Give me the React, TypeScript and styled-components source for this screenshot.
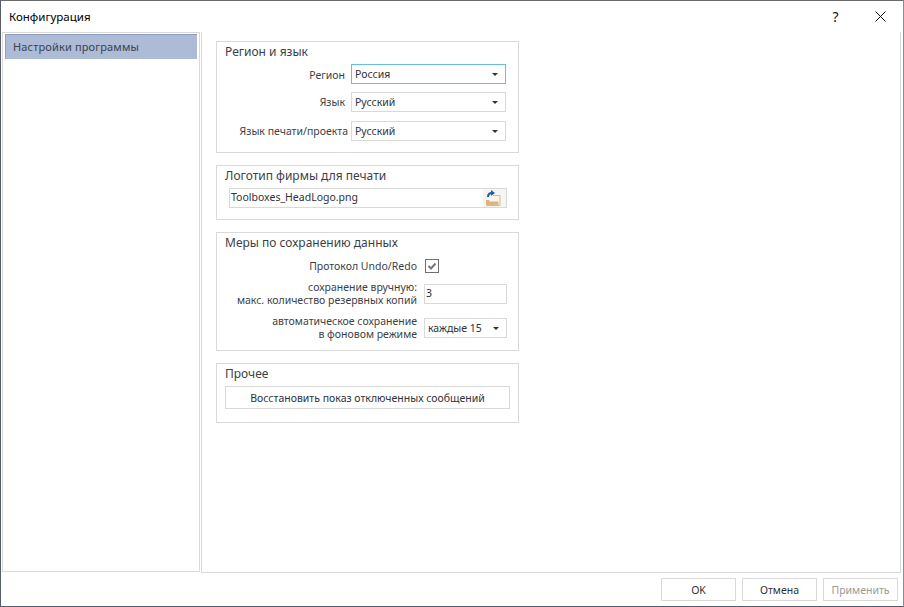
import React from 'react';
import styled, { createGlobalStyle } from 'styled-components';

const Global = createGlobalStyle`
  html, body { margin: 0; padding: 0; background: #fff; }
  body { font-family: "Noto Sans", "Liberation Sans", sans-serif; }
`;

const Window = styled.div`
  box-sizing: border-box;
  width: 904px;
  height: 607px;
  display: flex;
  flex-direction: column;
  background: #fff;
  border: 1px solid #565c6c;
  border-top-color: #6a6a6a;
  border-right-color: #8a8d96;
  overflow: hidden;
`;

const TitleBar = styled.div`
  height: 31px;
  flex: none;
  display: flex;
  align-items: center;
  padding-left: 8px;
  font-size: 11.5px;
  color: #000;
`;

const TitleText = styled.span`
  flex: 1;
`;

const TitleButton = styled.div`
  width: 45px;
  height: 31px;
  display: flex;
  align-items: center;
  justify-content: center;
  font-size: 14px;
  color: #111;
`;

const Body = styled.div`
  flex: none;
  height: 541px;
  display: flex;
  padding-left: 1px;
  gap: 1px;
`;

const Sidebar = styled.div`
  box-sizing: border-box;
  width: 198px;
  height: 540px;
  border: 1px solid #d9d9d9;
  padding: 1px 2px;
`;

const NavItem = styled.div`
  height: 25px;
  box-sizing: border-box;
  padding: 0 0 1px 7px;
  display: flex;
  align-items: center;
  background: #adbbd6;
  border-top: 1px solid #8f9ec0;
  border-left: 1px solid #8f9ec0;
  font-size: 11px;
  letter-spacing: 0.15px;
  color: #3c4250;
`;

const Content = styled.div`
  box-sizing: border-box;
  width: 700px;
  height: 541px;
  border: 1px solid #d9d9d9;
  border-top: none;
  padding: 9px 0 0 14px;
  display: flex;
  flex-direction: column;
  align-items: flex-start;
  gap: 12px;
`;

const Group = styled.section<{ $height: number }>`
  box-sizing: border-box;
  width: 303px;
  height: ${(p) => p.$height}px;
  border: 1px solid #d9d9d9;
  padding: 0 8px;
  display: flex;
  flex-direction: column;
`;

const GroupTitle = styled.div`
  height: 21px;
  flex: none;
  font-size: 12px;
  line-height: 20px;
  color: #3c3f48;
`;

const Row = styled.div<{ $top?: number; $labelWidth: number; $gap: number }>`
  display: grid;
  grid-template-columns: ${(p) => p.$labelWidth}px auto;
  column-gap: ${(p) => p.$gap}px;
  align-items: center;
  margin-top: ${(p) => p.$top ?? 0}px;
`;

const Label = styled.div<{ $overhang?: number; $drop?: number }>`
  text-align: right;
  font-size: 10.5px;
  line-height: 13px;
  color: #3c3f48;
  white-space: nowrap;
  margin-right: ${(p) => -(p.$overhang ?? 0)}px;
  padding-top: ${(p) => p.$drop ?? 0}px;
`;

const Field = styled.div<{ $width: number; $focused?: boolean }>`
  box-sizing: border-box;
  width: ${(p) => p.$width}px;
  height: 20px;
  padding: 0 3px;
  display: flex;
  align-items: center;
  justify-content: space-between;
  background: #fff;
  border: 1px solid ${(p) => (p.$focused ? '#6dbce4' : '#d9d9d9')};
  font-size: 10.5px;
  color: #2f3138;
`;

const NumberField = styled(Field)`
  padding: 0 0 3px 1px;
`;

const Caret = styled.span`
  width: 0;
  height: 0;
  margin-right: 4px;
  border-left: 3px solid transparent;
  border-right: 3px solid transparent;
  border-top: 3px solid #333;
`;

const FileField = styled.div`
  box-sizing: border-box;
  width: 278px;
  height: 20px;
  margin: 1px 0 0 4px;
  padding-left: 1px;
  display: flex;
  align-items: center;
  justify-content: space-between;
  border: 1px solid #d9d9d9;
  font-size: 10.5px;
  color: #2f3138;
`;

const FileName = styled.span`
  padding-bottom: 2px;
`;

const Browse = styled.div`
  box-sizing: border-box;
  width: 23px;
  height: 18px;
  padding: 0 3px 0 0;
  background: #f5f5f5;
  display: flex;
  align-items: center;
  justify-content: center;
`;

const Check = styled.div`
  box-sizing: border-box;
  width: 14px;
  height: 14px;
  margin-left: 1px;
  border: 1px solid #6e6e6e;
  display: flex;
  align-items: center;
  justify-content: center;
`;

const WideButton = styled.div`
  box-sizing: border-box;
  width: 285px;
  height: 23px;
  margin-top: 1px;
  display: flex;
  align-items: center;
  justify-content: center;
  border: 1px solid #d9d9d9;
  font-size: 10.5px;
  color: #2f3138;
`;

const Footer = styled.div`
  flex: 1;
  display: flex;
  justify-content: flex-end;
  gap: 6px;
  padding: 5px 5px 0 0;
`;

const FooterButton = styled.div<{ $disabled?: boolean }>`
  box-sizing: border-box;
  width: 75px;
  height: 23px;
  display: flex;
  align-items: center;
  justify-content: center;
  border: 1px solid #d9d9d9;
  font-size: 10.5px;
  color: ${(p) => (p.$disabled ? '#9a9a9a' : '#2f3138')};
`;

const FolderIcon = () => (
  <svg width="16" height="16" viewBox="0 0 16 16">
    <path d="M8 5.500h7v10H2v-3" fill="#fbf6ea" stroke="#e3b878" strokeWidth="1" />
    <path d="M1 10h3l1 1.500h8.500V15.500H1z" fill="#dcb67c" />
    <path d="M3 7C3 4 5 3 7 3" fill="none" stroke="#1f5da8" strokeWidth="2" />
    <path d="M6 0L10 3L6 6z" fill="#1f5da8" />
  </svg>
);

const CloseIcon = () => (
  <svg width="11" height="11" viewBox="0 0 11 11">
    <path d="M0.500 0.500L10.500 10.500M10.500 0.500L0.500 10.500" stroke="#111" strokeWidth="1" />
  </svg>
);

const CheckIcon = () => (
  <svg width="10" height="10" viewBox="0 0 10 10">
    <path d="M1.500 5L4 7.500L8.500 2.500" fill="none" stroke="#777" strokeWidth="2" />
  </svg>
);

export default function App() {
  return (
    <>
      <Global />
      <Window>
        <TitleBar>
          <TitleText>Конфигурация</TitleText>
          <TitleButton>?</TitleButton>
          <TitleButton>
            <CloseIcon />
          </TitleButton>
        </TitleBar>
        <Body>
          <Sidebar>
            <NavItem>Настройки программы</NavItem>
          </Sidebar>
          <Content>
            <Group $height={112}>
              <GroupTitle>Регион и язык</GroupTitle>
              <Row $labelWidth={120} $gap={6} $top={1}>
                <Label $drop={2}>Регион</Label>
                <Field $width={155} $focused>
                  Россия
                  <Caret />
                </Field>
              </Row>
              <Row $labelWidth={120} $gap={6} $top={8}>
                <Label>Язык</Label>
                <Field $width={155}>
                  Русский
                  <Caret />
                </Field>
              </Row>
              <Row $labelWidth={120} $gap={6} $top={9}>
                <Label $overhang={3}>Язык печати/проекта</Label>
                <Field $width={155}>
                  Русский
                  <Caret />
                </Field>
              </Row>
            </Group>
            <Group $height={55}>
              <GroupTitle>Логотип фирмы для печати</GroupTitle>
              <FileField>
                <FileName>Toolboxes_HeadLogo.png</FileName>
                <Browse>
                  <FolderIcon />
                </Browse>
              </FileField>
            </Group>
            <Group $height={119}>
              <GroupTitle>Меры по сохранению данных</GroupTitle>
              <Row $labelWidth={192} $gap={7} $top={5}>
                <Label>Протокол Undo/Redo</Label>
                <Check>
                  <CheckIcon />
                </Check>
              </Row>
              <Row $labelWidth={192} $gap={7} $top={8}>
                <Label>
                  сохранение вручную:
                  <br />
                  макс. количество резервных копий
                </Label>
                <NumberField $width={83}>3</NumberField>
              </Row>
              <Row $labelWidth={192} $gap={7} $top={8}>
                <Label>
                  автоматическое сохранение
                  <br />
                  в фоновом режиме
                </Label>
                <Field $width={83}>
                  каждые 15
                  <Caret />
                </Field>
              </Row>
            </Group>
            <Group $height={60}>
              <GroupTitle>Прочее</GroupTitle>
              <WideButton>Восстановить показ отключенных сообщений</WideButton>
            </Group>
          </Content>
        </Body>
        <Footer>
          <FooterButton>OK</FooterButton>
          <FooterButton>Отмена</FooterButton>
          <FooterButton $disabled>Применить</FooterButton>
        </Footer>
      </Window>
    </>
  );
}
